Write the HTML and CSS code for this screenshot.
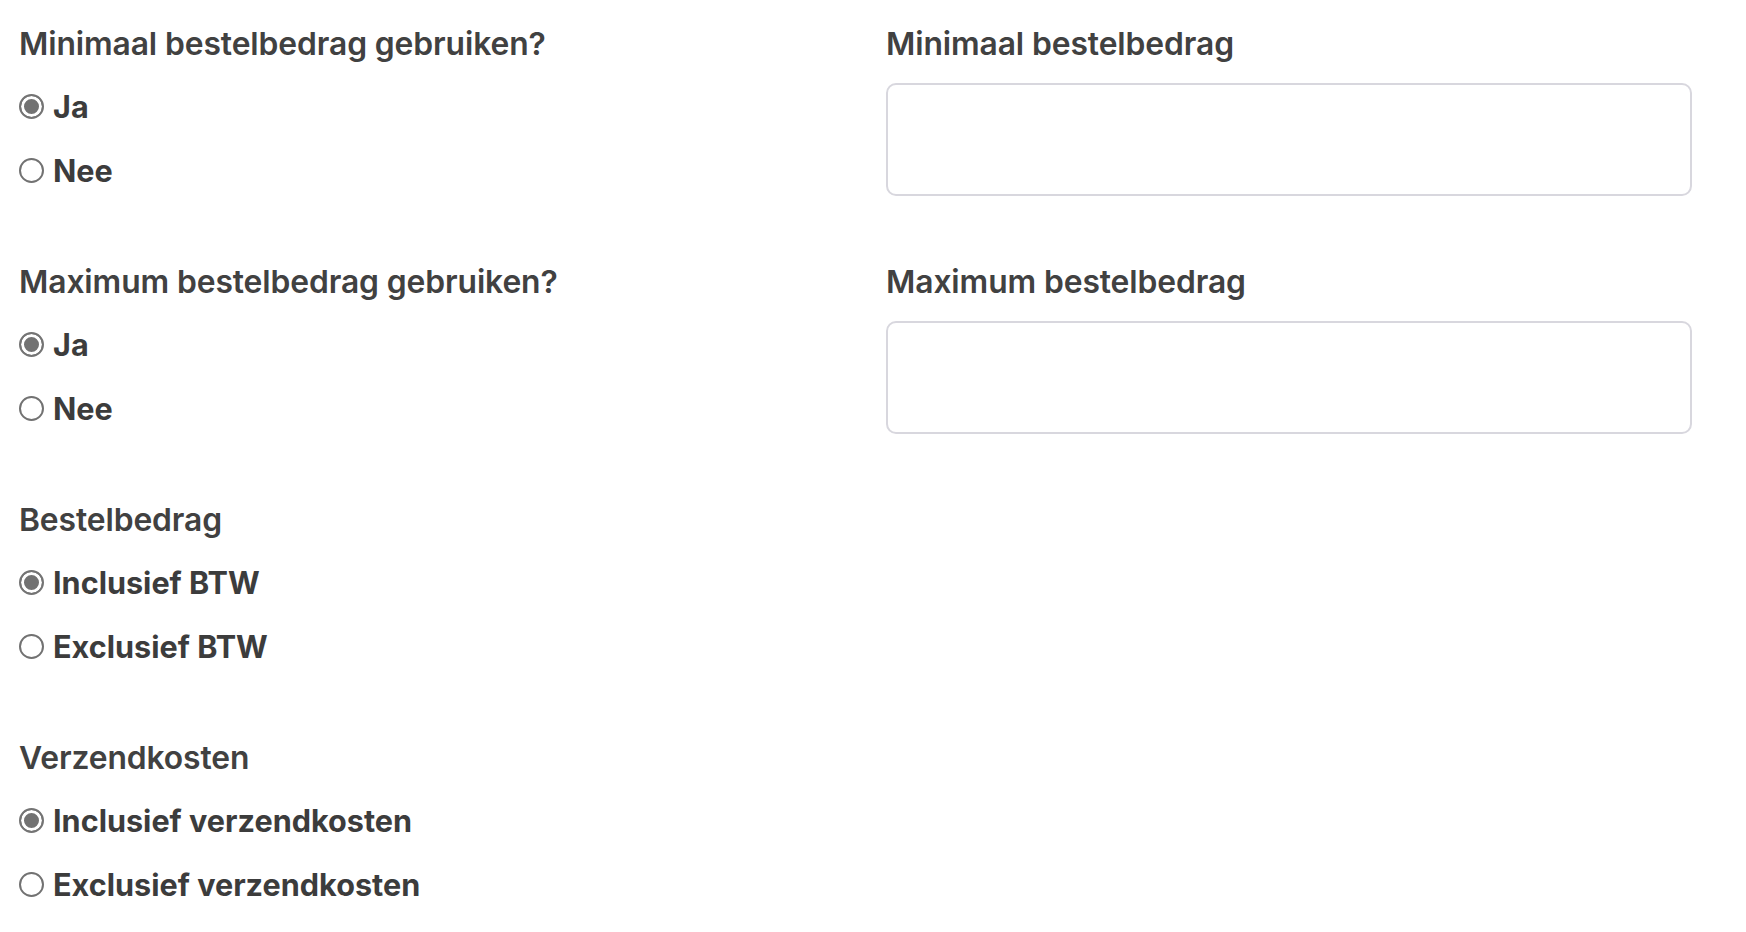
FILE: index.html
```html
<!DOCTYPE html>
<html lang="nl">
<head>
<meta charset="utf-8">
<title>Bestelbedrag instellingen</title>
<link rel="stylesheet" href="styles.css">
</head>
<body>
<form class="form">
  <div class="section">
    <div class="field">
      <div class="label">Minimaal bestelbedrag gebruiken?</div>
      <label class="option"><input class="radio" type="radio" name="min" checked><span>Ja</span></label>
      <label class="option"><input class="radio" type="radio" name="min"><span>Nee</span></label>
    </div>
    <div class="field">
      <div class="label">Minimaal bestelbedrag</div>
      <input class="text-input" type="text">
    </div>
  </div>
  <div class="section">
    <div class="field">
      <div class="label">Maximum bestelbedrag gebruiken?</div>
      <label class="option"><input class="radio" type="radio" name="max" checked><span>Ja</span></label>
      <label class="option"><input class="radio" type="radio" name="max"><span>Nee</span></label>
    </div>
    <div class="field">
      <div class="label">Maximum bestelbedrag</div>
      <input class="text-input" type="text">
    </div>
  </div>
  <div class="section">
    <div class="field">
      <div class="label">Bestelbedrag</div>
      <label class="option"><input class="radio" type="radio" name="btw" checked><span>Inclusief BTW</span></label>
      <label class="option"><input class="radio" type="radio" name="btw"><span>Exclusief BTW</span></label>
    </div>
  </div>
  <div class="section">
    <div class="field">
      <div class="label">Verzendkosten</div>
      <label class="option"><input class="radio" type="radio" name="verz" checked><span>Inclusief verzendkosten</span></label>
      <label class="option"><input class="radio" type="radio" name="verz"><span>Exclusief verzendkosten</span></label>
    </div>
  </div>
</form>
</body>
</html>
```

FILE: styles.css
```css
html, body {
  margin: 0;
  padding: 0;
  background: #ffffff;
}

body {
  font-family: Inter, Lato, "Liberation Sans", sans-serif;
  color: #404040;
}

.form {
  display: flex;
  flex-direction: column;
  gap: 59px;
  padding: 23px 0 0 19px;
}

.section {
  display: grid;
  grid-template-columns: 867px 806px;
  height: 179px;
}

.field {
  display: flex;
  flex-direction: column;
}

.label {
  font-size: 31.8px;
  line-height: 40px;
  font-weight: 600;
  color: #414141;
  margin-top: 1px;
  margin-bottom: 10px;
  letter-spacing: -0.1px;
}

.option {
  display: flex;
  align-items: center;
  height: 64px;
  font-size: 30.6px;
  font-weight: 700;
  color: #3c3c3c;
}

.option span {
  margin-left: 9px;
}

.radio {
  appearance: none;
  -webkit-appearance: none;
  margin: 0;
  width: 25px;
  height: 25px;
  box-sizing: border-box;
  border-radius: 50%;
  border: 2px solid #727272;
  background: #ffffff;
  flex: none;
}

.radio:checked {
  border: 2.4px solid #747474;
  box-shadow: inset 0 0 0 3px #ffffff;
  background: #727272;
}

.text-input {
  box-sizing: border-box;
  width: 806px;
  height: 113px;
  margin-top: 9px;
  border: 2px solid #d8d7de;
  border-radius: 10px;
  background: #ffffff;
  font-family: inherit;
  font-size: 31px;
  padding: 0 20px;
  outline: none;
}
```
